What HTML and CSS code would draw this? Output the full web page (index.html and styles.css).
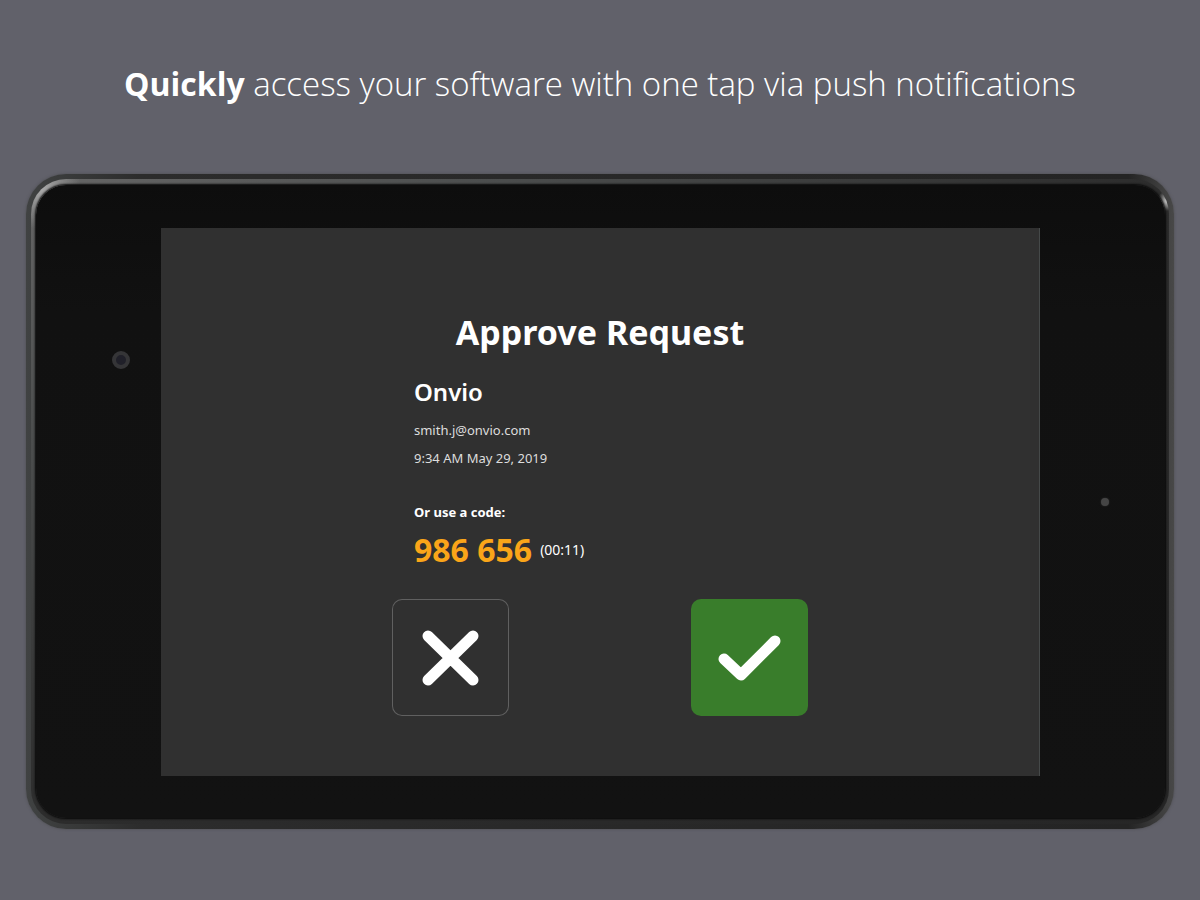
FILE: index.html
```
<!DOCTYPE html>
<html lang="en">
<head>
    <meta charset="UTF-8">
    <meta name="viewport" content="width=device-width, initial-scale=1.0">
    <title>Approve Request</title>
    <link rel="stylesheet" href="styles.css">
</head>
<body>
    <h1 class="tagline"><strong>Quickly</strong> access your software with one tap via push notifications</h1>

    <!-- Tablet -->
    <div class="tablet">
        <div class="rim">
            <div class="face">
                <div class="bezel bezel-left">
                    <span class="camera"></span>
                </div>

                <main class="screen">
                    <div class="request">
                        <h2>Approve Request</h2>

                        <div class="details">
                            <h3>Onvio</h3>
                            <p class="meta">smith.j@onvio.com</p>
                            <p class="meta">9:34 AM May 29, 2019</p>
                            <p class="code-label">Or use a code:</p>
                            <p class="code-row"><span class="code">986 656</span> <span class="timer">(00:11)</span></p>
                        </div>

                        <div class="actions">
                            <button type="button" class="action deny" aria-label="Deny">
                                <svg viewBox="0 0 117 117">
                                    <path d="M36 37 L81 81 M81 37 L36 81"/>
                                </svg>
                            </button>
                            <button type="button" class="action approve" aria-label="Approve">
                                <svg viewBox="0 0 117 117">
                                    <path d="M33 60 L50 76 L84 42"/>
                                </svg>
                            </button>
                        </div>
                    </div>
                </main>

                <div class="bezel bezel-right">
                    <span class="sensor"></span>
                </div>
            </div>
        </div>
    </div>
</body>
</html>
```

FILE: styles.css
```
* {
    box-sizing: border-box;
}

body {
    margin: 0;
    padding: 60px 26px;
    background-color: #61616a;
    color: #fff;
    font-family: 'Noto Sans', 'Open Sans', sans-serif;
}

h1, h2, h3, p {
    margin: 0;
}

.tagline {
    font-family: 'Open Sans', 'Noto Sans', sans-serif;
    font-size: 33px;
    line-height: 48px;
    font-weight: 300;
    text-align: center;
    color: #fff;
}

.tagline strong {
    font-size: 32px;
    font-weight: 700;
}

/* Tablet body */
.tablet {
    margin-top: 66px;
    padding: 5px;
    border-radius: 40px;
    background: linear-gradient(to right, #404242, #2c2c2c 10%, #242424 96%, #484848);
    box-shadow: 0 0 3px #4c4c50;
}

.rim {
    padding: 6px 4px 6px 5px;
    border-radius: 35px;
    background:
        radial-gradient(circle at 1136px 22px, #ccc, transparent 10px),
        radial-gradient(circle at 10px 10px, #aaa, transparent 40px),
        linear-gradient(to bottom right, #666 0, #4c4e4e 20%, #2c2c2c 50%, #262626);
}

.face {
    display: grid;
    grid-template-columns: 1fr 7fr 1fr;
    border-radius: 30px;
    background: linear-gradient(#0d0d0d, #111 20%, #121212);
    box-shadow: 0 0 2px 1px #080808;
}

.bezel-left {
    padding: 166px 0 0 76px;
}

.bezel-right {
    padding: 313px 0 0 61px;
}

.camera,
.sensor {
    display: block;
    border-radius: 50%;
}

.camera {
    width: 18px;
    height: 18px;
    border: 4px solid #353537;
    background-color: #202029;
}

.sensor {
    width: 8px;
    height: 8px;
    background-color: #454545;
    box-shadow: 0 0 2px #333;
}

/* Screen */
.screen {
    display: flex;
    justify-content: center;
    margin: 43px 0 42px;
    padding: 80px 0 60px;
    background-color: #303030;
    border-right: 1px solid #454949;
}

.request {
    width: 416px;
}

.request h2 {
    font-size: 34px;
    line-height: 48px;
    font-weight: 700;
    text-align: center;
}

.details {
    padding: 16px 22px 0;
}

.details h3 {
    font-size: 24px;
    line-height: 40px;
    font-weight: 600;
}

.meta {
    margin-bottom: 8px;
    font-size: 13px;
    line-height: 20px;
    color: #ddd;
}

.meta:first-of-type {
    margin-top: 8px;
}

.code-label {
    margin-top: 32px;
    font-size: 13px;
    line-height: 24px;
    font-weight: 700;
}

.code-row {
    display: flex;
    align-items: center;
    gap: 8px;
    line-height: 52px;
}

.code {
    font-size: 32px;
    font-weight: 700;
    color: #faa519;
}

.timer {
    font-size: 14px;
}

/* Buttons */
.actions {
    display: flex;
    justify-content: space-between;
    margin-top: 23px;
}

.action {
    width: 117px;
    height: 117px;
    padding: 0;
    border: none;
    border-radius: 10px;
    background: none;
    cursor: pointer;
}

.action svg {
    display: block;
    width: 100%;
    height: 100%;
    fill: none;
    stroke: #fff;
    stroke-width: 11;
    stroke-linecap: round;
    stroke-linejoin: round;
}

.deny {
    box-shadow: inset 0 0 0 1px #606060;
}

.approve {
    background-color: #397d2b;
}
```
